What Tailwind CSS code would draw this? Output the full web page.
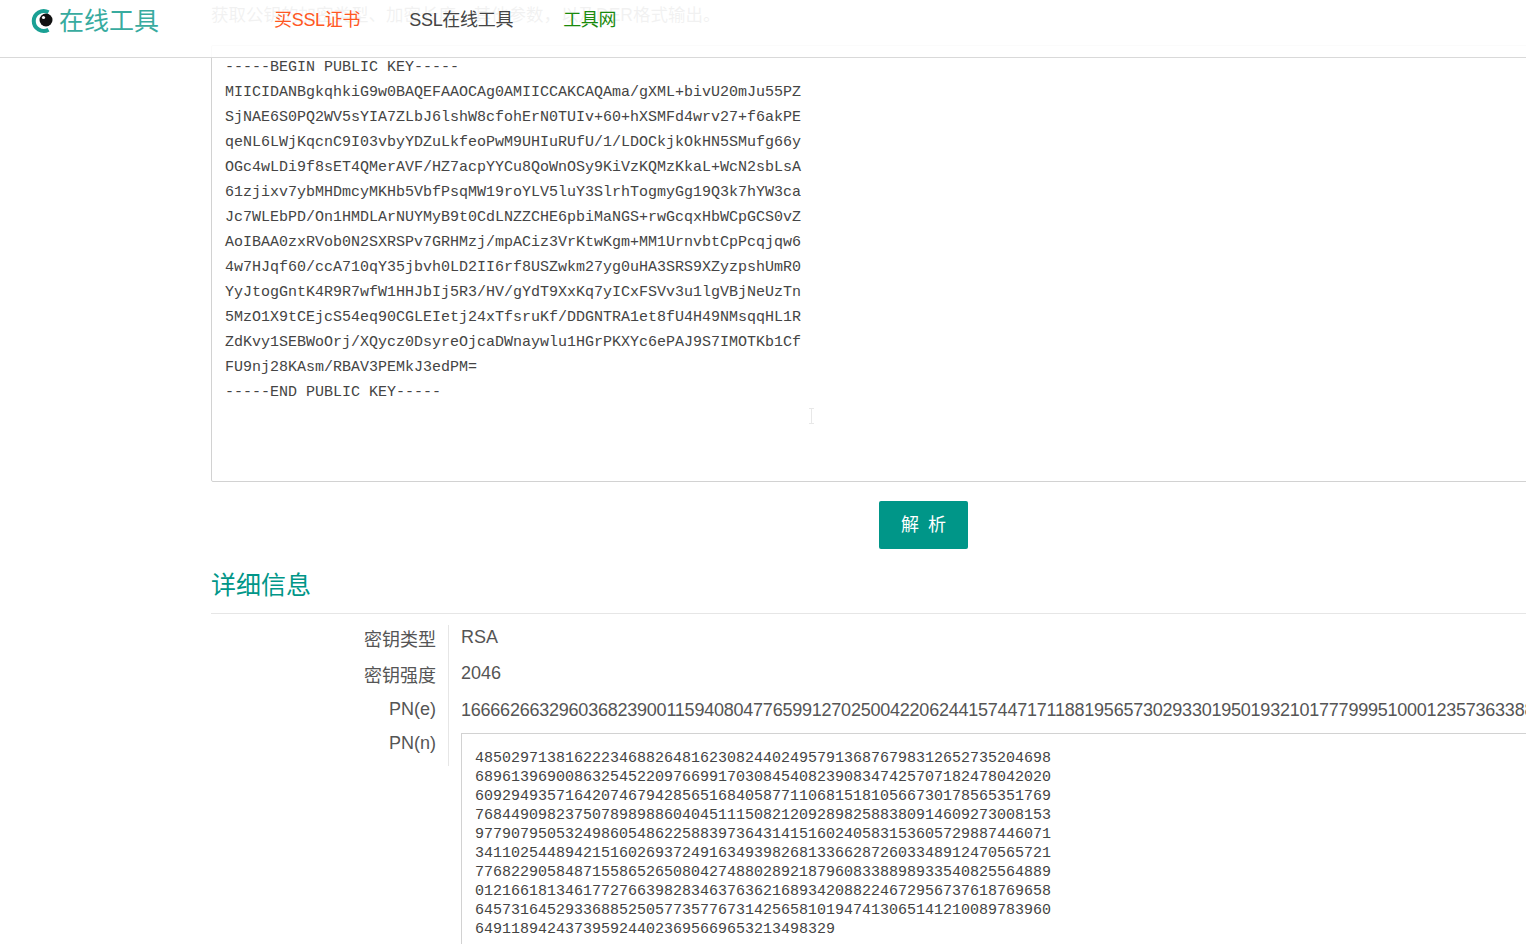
<!DOCTYPE html>
<html lang="zh">

<head>
  <meta charset="UTF-8">
  <title>公钥解析 - 在线工具</title>
  <script src="https://cdn.jsdelivr.net/npm/@tailwindcss/browser@4"></script>
</head>

<body class="bg-white font-['Liberation_Sans','Noto_Sans_CJK_SC',sans-serif] text-[#555]">
  <div class="relative w-[1526px] h-[944px] overflow-hidden">

    <!-- Header, fixed over the scrolled page -->
    <header class="absolute top-0 left-0 z-10 w-full h-[58px] flex items-start bg-white/90 border-b border-[#d9d9d9]">
      <a href="#" class="flex items-center w-[274px] pl-[31px] pt-[6px]">
        <svg width="24" height="26" viewBox="0 0 24 26" class="mr-[4px] shrink-0">
          <path d="M17.5 4.2A10 10 0 1 0 17.5 21.8" fill="none" stroke="#1aa094" stroke-width="4" />
          <circle cx="15" cy="12" r="6.5" fill="#111" />
          <circle cx="12.5" cy="9.5" r="1.6" fill="#fff" />
        </svg>
        <span class="text-[25px] leading-[30px] text-[#38ab9f]">在线工具</span>
      </a>
      <nav class="flex items-center text-[18px] leading-[24px] tracking-[-0.3px] pt-[8px]">
        <a href="#" class="text-[#ff5722] mr-[49px]">买SSL证书</a>
        <a href="#" class="text-[#444] mr-[50px]">SSL在线工具</a>
        <a href="#" class="text-[#1a8a0c]">工具网</a>
      </nav>
    </header>

    <!-- Page -->
    <main class="w-[1425px] ml-[211px]">
      <p class="text-[17.5px] leading-[31px] h-[45px] text-[#777]">获取公钥的加密类型、加密长度、其他参数，以及DER格式输出。</p>

      <textarea readonly rows="1" class="block w-full h-[437px] px-[13px] pt-[9px] resize-none outline-none border border-[#d2d2d2] rounded-[2px] whitespace-pre overflow-hidden font-['Liberation_Mono',monospace] text-[15px] leading-[25px] text-[#444]">-----BEGIN PUBLIC KEY-----
MIICIDANBgkqhkiG9w0BAQEFAAOCAg0AMIICCAKCAQAma/gXML+bivU20mJu55PZ
SjNAE6S0PQ2WV5sYIA7ZLbJ6lshW8cfohErN0TUIv+60+hXSMFd4wrv27+f6akPE
qeNL6LWjKqcnC9I03vbyYDZuLkfeoPwM9UHIuRUfU/1/LDOCkjkOkHN5SMufg66y
OGc4wLDi9f8sET4QMerAVF/HZ7acpYYCu8QoWnOSy9KiVzKQMzKkaL+WcN2sbLsA
61zjixv7ybMHDmcyMKHb5VbfPsqMW19roYLV5luY3SlrhTogmyGg19Q3k7hYW3ca
Jc7WLEbPD/On1HMDLArNUYMyB9t0CdLNZZCHE6pbiMaNGS+rwGcqxHbWCpGCS0vZ
AoIBAA0zxRVob0N2SXRSPv7GRHMzj/mpACiz3VrKtwKgm+MM1UrnvbtCpPcqjqw6
4w7HJqf60/ccA710qY35jbvh0LD2II6rf8USZwkm27yg0uHA3SRS9XZyzpshUmR0
YyJtogGntK4R9R7wfW1HHJbIj5R3/HV/gYdT9XxKq7yICxFSVv3u1lgVBjNeUzTn
5MzO1X9tCEjcS54eq90CGLEIetj24xTfsruKf/DDGNTRA1et8fU4H49NMsqqHL1R
ZdKvy1SEBWoOrj/XQycz0DsyreOjcaDWnaywlu1HGrPKXYc6ePAJ9S7IMOTKb1Cf
FU9nj28KAsm/RBAV3PEMkJ3edPM=
-----END PUBLIC KEY-----</textarea>

      <div class="flex justify-center mt-[19px]">
        <button class="w-[89px] h-[48px] pl-[2px] bg-[#009688] rounded-[2px] text-white text-[18px] tracking-[2px]">解 析</button>
      </div>

      <h2 class="mt-[19px] h-[46px] leading-[35px] text-[25px] text-[#009688] border-b border-[#e6e6e6]">详细信息</h2>

      <div class="flex mt-[11px] text-[18px] leading-[24px]">
        <div class="w-[238px] h-[141px] shrink-0 pr-[12px] border-r border-[#e6e6e6] text-right">
          <div class="h-[36px] pt-[3px]">密钥类型</div>
          <div class="h-[36px] pt-[3px]">密钥强度</div>
          <div class="h-[34px]">PN(e)</div>
          <div>PN(n)</div>
        </div>
        <div class="pl-[12px]">
          <div class="h-[36px]">RSA</div>
          <div class="h-[36px]">2046</div>
          <div class="h-[36px] pt-[1px] whitespace-nowrap tracking-[-0.23px]">16666266329603682390011594080477659912702500422062441574471711881956573029330195019321017779995100012357363388</div>
          <textarea readonly rows="1" class="block w-[1100px] h-[260px] px-[13px] pt-[15px] resize-none outline-none border border-[#d2d2d2] whitespace-pre overflow-hidden font-['Liberation_Mono',monospace] text-[15px] leading-[19px] text-[#444]">4850297138162223468826481623082440249579136876798312652735204698
6896139690086325452209766991703084540823908347425707182478042020
6092949357164207467942856516840587711068151810566730178565351769
7684490982375078989886040451115082120928982588380914609273008153
9779079505324986054862258839736431415160240583153605729887446071
3411025448942151602693724916349398268133662872603348912470565721
7768229058487155865265080427488028921879608338898933540825564889
0121661813461772766398283463763621689342088224672956737618769658
6457316452933688525057735776731425658101947413065141210089783960
6491189424373959244023695669653213498329</textarea>
        </div>
      </div>
    </main>

    <!-- Mouse cursor left in the shot -->
    <svg width="5" height="16" viewBox="0 0 5 16" class="absolute left-[809px] top-[408px]">
      <path d="M0 .5H5M2.5 .5V15.5M0 15.5H5" fill="none" stroke="#e8e8e8" />
    </svg>
  </div>
</body>

</html>
